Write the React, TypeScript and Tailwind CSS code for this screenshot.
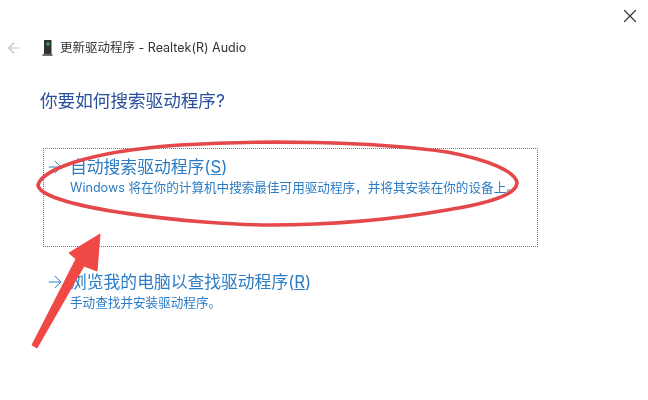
import { ArrowLeft, ArrowRight, X } from "lucide-react"

const FONT = "font-['Inter','Noto_Sans_CJK_SC',sans-serif]"

function DeviceIcon() {
  return (
    <svg width="11" height="16" viewBox="0 0 11 16" className="shrink-0">
      <rect x="2" y="0" width="7.5" height="14" fill="#2f3432" />
      <rect x="4.5" y="2.5" width="3" height="3" fill="#3fa45b" />
      <rect x="0.5" y="14" width="10" height="2" fill="#6b706d" />
    </svg>
  )
}

function Annotations() {
  return (
    <svg width="648" height="400" viewBox="0 0 648 400" className="absolute left-0 top-0 pointer-events-none">
      <path
        d="M38 185 C41 172 80 152 180 145 C260 140 370 141 447 152 C490 160 516 172 517 183 C516 195 490 203 447 210 C390 220 330 225 270 225 C200 225 40 208 38 185 Z"
        fill="none"
        stroke="#e5484a"
        strokeWidth="3.6"
      />
      <path d="M100 234 L69 253 L76 259 L32 345 L37 348 L84 266 L97 271 Z" fill="#f04844" stroke="#f04844" strokeLinejoin="round" />
    </svg>
  )
}

function Option({ title, hotkey, desc }: { title: string; hotkey: string; desc: string }) {
  return (
    <div className="flex gap-[5px]">
      <ArrowRight size={20} strokeWidth={1.2} className="mt-[2px] ml-[1px] shrink-0 text-[#2b7cc4]" />
      <div>
        <div className="text-[16.8px] leading-[24px] text-[#2b7cc4]">
          {title}(<span className="underline">{hotkey}</span>)
        </div>
        <div className="text-[12.6px] leading-[17px] text-[#2b7cc4] whitespace-nowrap">{desc}</div>
      </div>
    </div>
  )
}

export default function App() {
  return (
    <div className={`relative w-[648px] h-[400px] overflow-hidden bg-white ${FONT}`}>
      <div className="blur-[0.4px]">
        <div className="flex justify-end pt-[5px] pr-[7px]">
          <X size={22} strokeWidth={1.3} className="text-[#333333]" />
        </div>
        <div className="flex items-center mt-[12px] h-[18px] pl-[5px]">
          <ArrowLeft size={18} strokeWidth={1.5} className="text-[#c4c4c4]" />
          <div className="ml-[19px]"><DeviceIcon /></div>
          <span className="ml-[7px] text-[12.5px] text-[#333333] whitespace-nowrap">更新驱动程序 - Realtek(R) Audio</span>
        </div>
        <h1 className="mt-[32px] ml-[40px] text-[17.6px] leading-[24px] font-normal text-[#2a4f9e]">你要如何搜索驱动程序?</h1>
        <div className="ml-[43px] mt-[35px] w-[495px] h-[99px] border border-dotted border-[#777777] pt-[6px]">
          <Option title="自动搜索驱动程序" hotkey="S" desc="Windows 将在你的计算机中搜索最佳可用驱动程序，并将其安装在你的设备上。" />
        </div>
        <div className="ml-[44px] mt-[23px]">
          <Option title="浏览我的电脑以查找驱动程序" hotkey="R" desc="手动查找并安装驱动程序。" />
        </div>
      </div>
      <Annotations />
    </div>
  )
}
